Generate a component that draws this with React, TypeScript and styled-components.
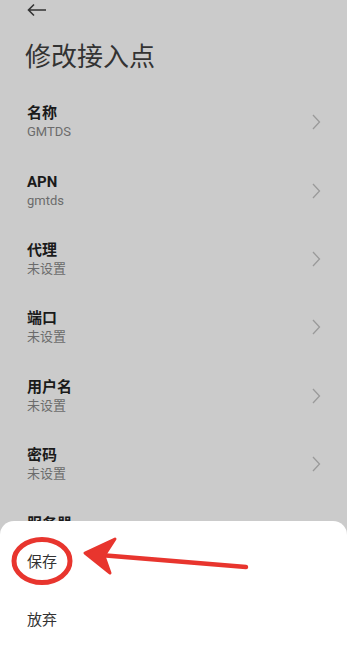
import styled, { createGlobalStyle } from "styled-components";

const GlobalStyle = createGlobalStyle`
  html, body {
    margin: 0;
    padding: 0;
    background: #cbcbcb;
    font-family: Roboto, "Noto Sans CJK SC", sans-serif;
  }
  body {
    width: 347px;
    height: 650px;
    overflow: hidden;
  }
`

const Page = styled.div`
  position: relative;
  width: 347px;
  height: 650px;
  overflow: hidden;
  background: #cbcbcb;
  display: flex;
  flex-direction: column;
`

const TopBar = styled.div`
  height: 20px;
  padding-left: 27px;
  display: flex;
  align-items: center;
  color: #333;
`

const Title = styled.h1`
  margin: 0;
  height: 74px;
  padding-left: 25px;
  font-size: 26px;
  line-height: 74px;
  font-weight: 400;
  color: #333;
`

const List = styled.div`
  display: flex;
  flex-direction: column;
  padding: 0 26px 0 27px;
`

const Row = styled.div`
  height: 68.4px;
  box-sizing: border-box;
  padding: 9px 0 21px;
  display: flex;
  align-items: center;
  justify-content: space-between;
`

const Texts = styled.div`
  display: flex;
  flex-direction: column;
`

const Label = styled.div`
  font-size: 15px;
  line-height: 20px;
  font-weight: 700;
  color: #1a1a1a;
`

const Value = styled.div`
  font-size: 13px;
  line-height: 18px;
  color: #6b6b6b;
`

const Sheet = styled.div`
  position: absolute;
  left: 0;
  right: 0;
  bottom: 0;
  height: 129px;
  background: #fff;
  border-radius: 14px 14px 0 0;
  padding-top: 10px;
  box-sizing: border-box;
  display: flex;
  flex-direction: column;
`

const SheetItem = styled.div`
  height: 58px;
  display: flex;
  align-items: center;
  padding-left: 27px;
  font-size: 15px;
  color: #333;
`

const Annotation = styled.svg`
  position: absolute;
  left: 0;
  top: 0;
  pointer-events: none;
`

const items = [
  { label: "名称", value: "GMTDS" },
  { label: "APN", value: "gmtds" },
  { label: "代理", value: "未设置" },
  { label: "端口", value: "未设置" },
  { label: "用户名", value: "未设置" },
  { label: "密码", value: "未设置" },
  { label: "服务器", value: "未设置" },
]

const Chevron = () => (
  <svg width="10" height="16" viewBox="0 0 10 16">
    <path d="M2 1 L8.5 8 L2 15" fill="none" stroke="#9a9a9a" strokeWidth="1.3" />
  </svg>
)

export default function App() {
  return (
    <Page>
      <GlobalStyle />
      <TopBar>
        <svg width="20" height="14" viewBox="0 0 20 14">
          <path d="M1.5 7 H19 M7 1.5 L1.5 7 L7 12.5" fill="none" stroke="#333" strokeWidth="1.6" />
        </svg>
      </TopBar>
      <Title>修改接入点</Title>
      <List>
        {items.map((it) => (
          <Row key={it.label}>
            <Texts>
              <Label>{it.label}</Label>
              <Value>{it.value}</Value>
            </Texts>
            <Chevron />
          </Row>
        ))}
      </List>
      <Sheet>
        <SheetItem>保存</SheetItem>
        <SheetItem>放弃</SheetItem>
      </Sheet>
      <Annotation width="347" height="650" viewBox="0 0 347 650">
        <ellipse cx="42" cy="561" rx="28" ry="21.5" fill="none" stroke="#e8352e" strokeWidth="5" />
        <path d="M246 567 L100 555" fill="none" stroke="#e8352e" strokeWidth="4.5" strokeLinecap="round" />
        <path d="M115 539 L85 553 L110 573 L104 556 Z" fill="#e8352e" stroke="#e8352e" strokeWidth="3" strokeLinejoin="round" />
      </Annotation>
    </Page>
  )
}
